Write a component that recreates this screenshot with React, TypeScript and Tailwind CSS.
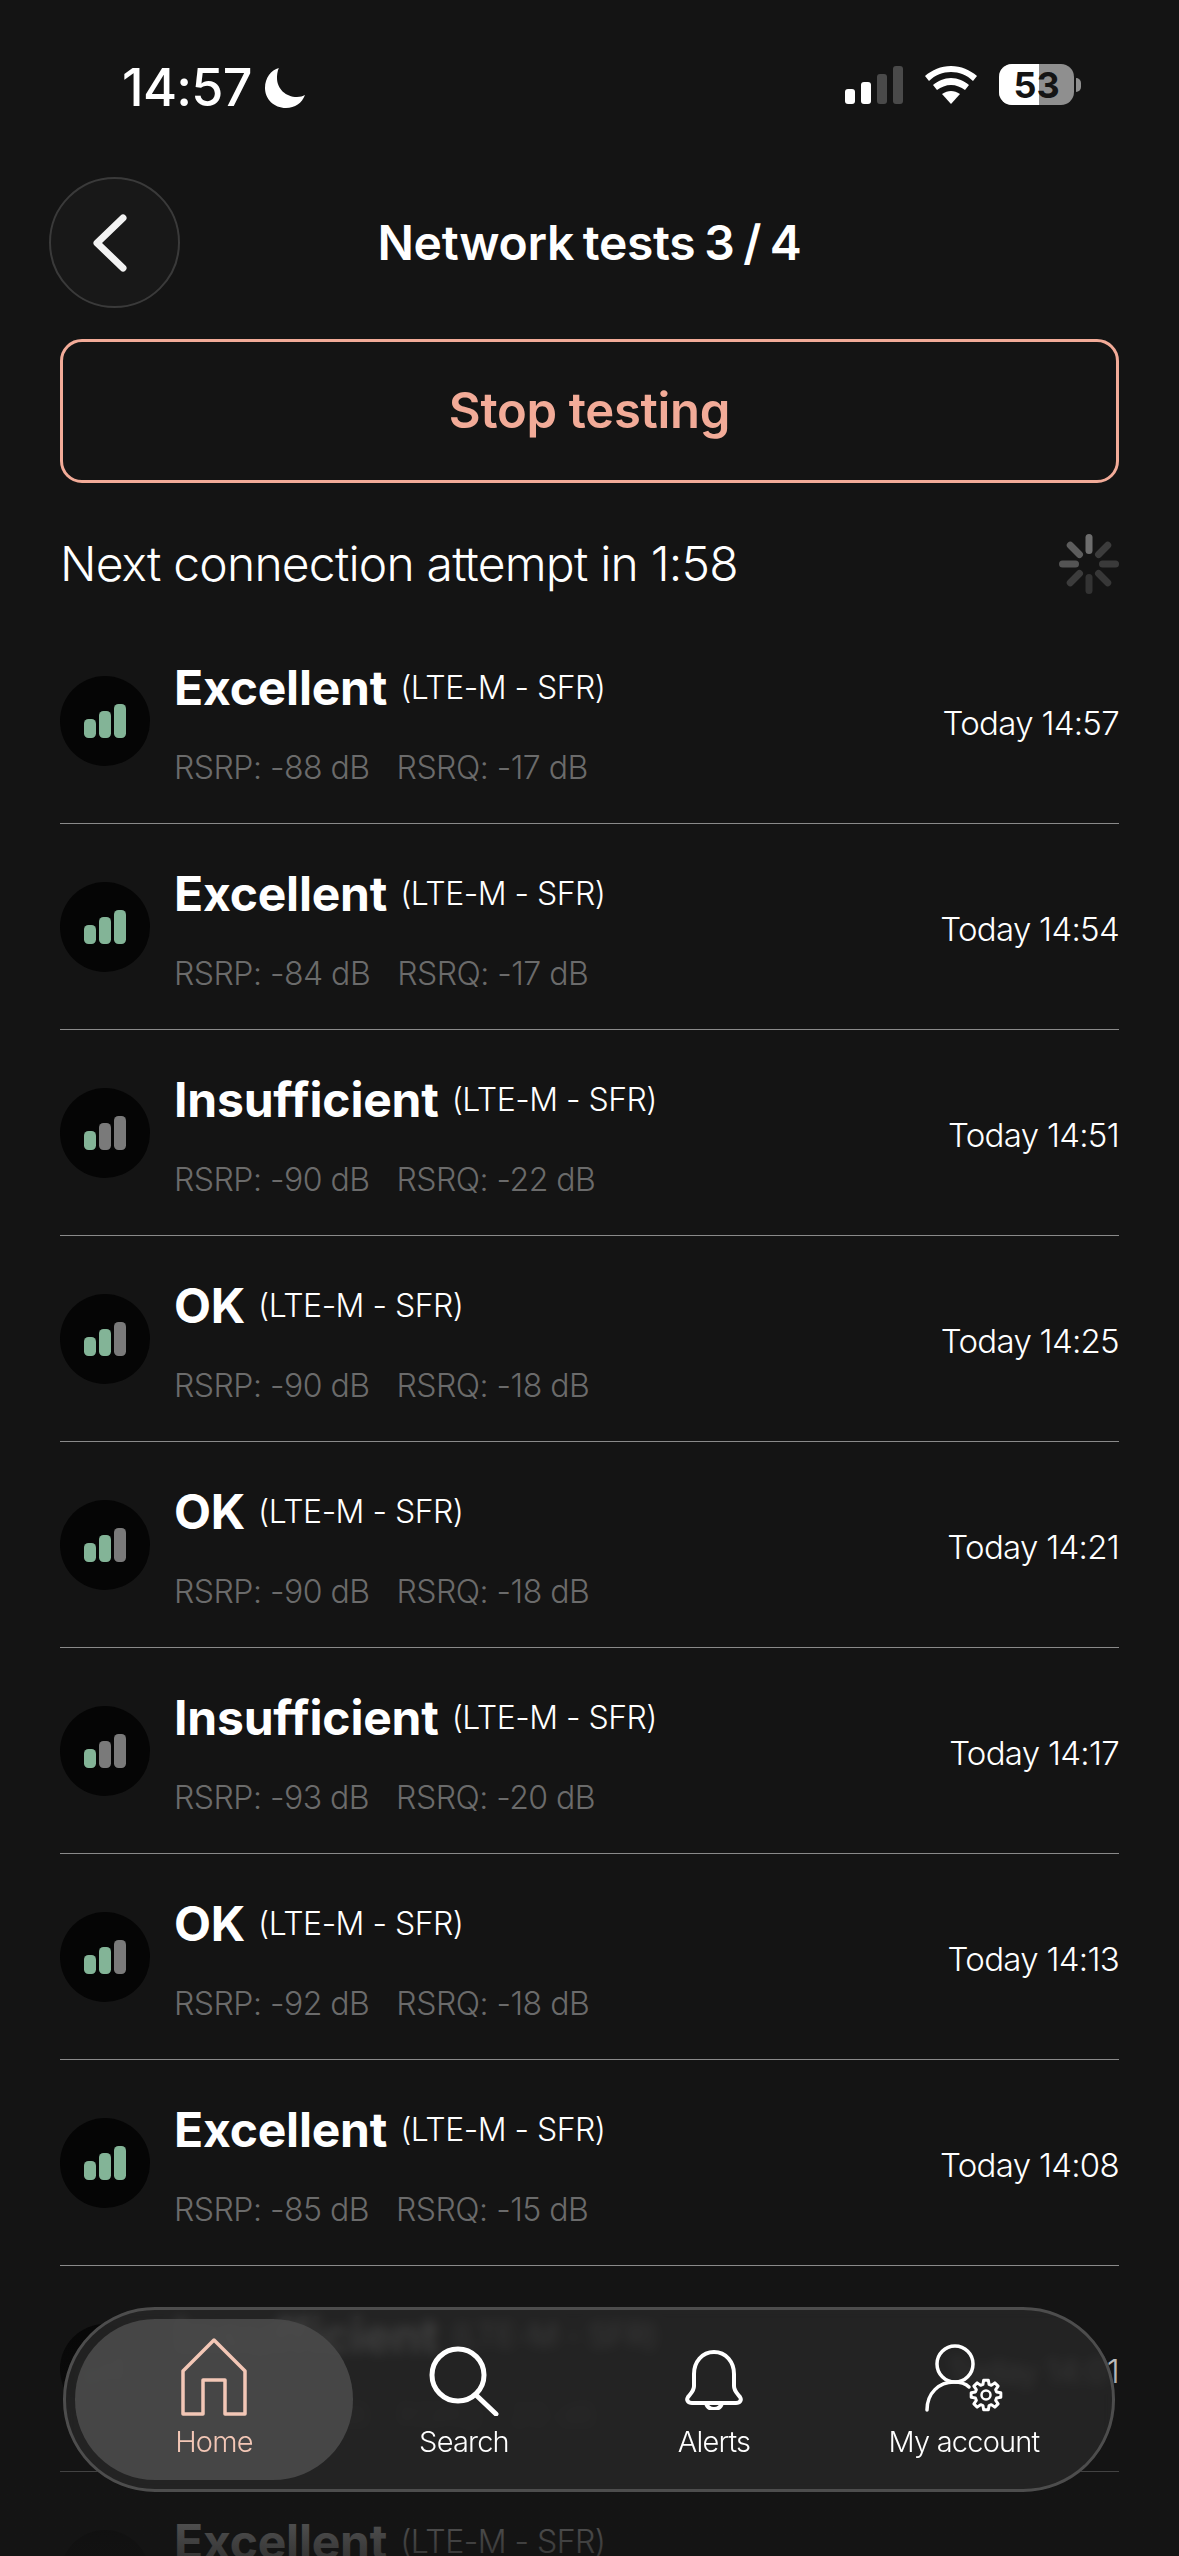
import { Fragment } from 'react'

const ROWS = [
  { label: 'Excellent', level: 3, rsrp: -88, rsrq: -17, time: 'Today 14:57' },
  { label: 'Excellent', level: 3, rsrp: -84, rsrq: -17, time: 'Today 14:54' },
  { label: 'Insufficient', level: 1, rsrp: -90, rsrq: -22, time: 'Today 14:51' },
  { label: 'OK', level: 2, rsrp: -90, rsrq: -18, time: 'Today 14:25' },
  { label: 'OK', level: 2, rsrp: -90, rsrq: -18, time: 'Today 14:21' },
  { label: 'Insufficient', level: 1, rsrp: -93, rsrq: -20, time: 'Today 14:17' },
  { label: 'OK', level: 2, rsrp: -92, rsrq: -18, time: 'Today 14:13' },
  { label: 'Excellent', level: 3, rsrp: -85, rsrq: -15, time: 'Today 14:08' },
  { label: 'Insufficient', level: 1, rsrp: -94, rsrq: -20, time: 'Today 14:01' },
  { label: 'Excellent', level: 3, rsrp: -86, rsrq: -16, time: 'Today 13:57' },
]

const SPOKES = [
  { angle: 0, opacity: 0.38 },
  { angle: 45, opacity: 0.17 },
  { angle: 90, opacity: 0.16 },
  { angle: 135, opacity: 0.15 },
  { angle: 180, opacity: 0.13 },
  { angle: 225, opacity: 0.17 },
  { angle: 270, opacity: 0.27 },
  { angle: 315, opacity: 0.31 },
]

// outline of the little gear on the account icon
function gearPath(cx: number, cy: number, outer: number, inner: number, teeth: number) {
  const pts: string[] = []
  const step = (Math.PI * 2) / teeth
  for (let i = 0; i < teeth; i++) {
    const a = i * step
    const corners = [
      [inner, a - step * 0.36],
      [outer, a - step * 0.2],
      [outer, a + step * 0.2],
      [inner, a + step * 0.36],
    ]
    corners.forEach(([r, t]) => {
      pts.push(`${(cx + r * Math.cos(t)).toFixed(2)} ${(cy + r * Math.sin(t)).toFixed(2)}`)
    })
  }
  return `M${pts.join('L')}Z`
}

function SignalBadge({ level }: { level: number }) {
  const bars = [
    { x: 24, y: 43, h: 19 },
    { x: 39, y: 35, h: 27 },
    { x: 54, y: 28, h: 34 },
  ]
  return (
    <svg width="90" height="90" viewBox="0 0 90 90" className="shrink-0">
      <circle cx="45" cy="45" r="45" fill="#050505" />
      {bars.map((b, i) => (
        <rect key={i} x={b.x} y={b.y} width="12" height={b.h} rx="4.5" fill={i < level ? '#83b497' : '#7a7a7a'} />
      ))}
    </svg>
  )
}

function Row({ label, level, rsrp, rsrq, time }: (typeof ROWS)[number]) {
  return (
    <div className="flex h-[206px] shrink-0 items-center border-b border-[#8a8a8a]">
      <SignalBadge level={level} />
      <div className="ml-[24px] flex flex-1 flex-col gap-[36px] pt-[6px]">
        <div className="flex h-[52px] items-center">
          <span className="text-[48px] leading-[52px] font-bold tracking-[-0.2px] text-white">{label}</span>
          <span className="ml-[13px] text-[32px] leading-[40px] font-light tracking-[-0.5px] text-white">(LTE-M - SFR)</span>
        </div>
        <div className="flex h-[36px] items-center gap-[27px] text-[32px] leading-[36px] font-light tracking-[-0.5px] text-[#6b6b6b]">
          <span>RSRP: {rsrp} dB</span>
          <span>RSRQ: {rsrq} dB</span>
        </div>
      </div>
      <span className="mt-[6px] text-[33px] font-light tracking-[-0.7px] text-white">{time}</span>
    </div>
  )
}

function StatusBar() {
  return (
    <div className="flex h-[177px] shrink-0 items-start justify-between pt-[64px] pl-[122px] pr-[98px]">
      <div className="flex items-center gap-[12px]">
        <span className="text-[52px] leading-[48px] font-medium tracking-[-0.7px] text-white">14:57</span>
        <svg width="42" height="42" viewBox="0 0 42 42">
          <path d="M15 1C14 2 13 7 13 11c0 11 9 19 20 19 3 0 6-1 8-2-3 8-10 13-19 13C10 41 1 32 1 21 1 11 7 3 15 1Z" fill="#fff" />
        </svg>
      </div>
      <div className="flex items-center">
        <svg width="58" height="38" viewBox="0 0 58 38">
          <rect x="0" y="23" width="10" height="15" rx="3" fill="#fff" />
          <rect x="16" y="16" width="10" height="22" rx="3" fill="#fff" />
          <rect x="32" y="8" width="10" height="30" rx="3" fill="#4a4a4a" />
          <rect x="48" y="0" width="10" height="38" rx="3" fill="#4a4a4a" />
        </svg>
        <svg width="52" height="38" viewBox="0 0 52 38" className="ml-[22px]">
          <path d="M26 0c10 0 19 4 26 10l-4 5C42 9 34 6 26 6S10 9 4 15l-4-5C7 4 16 0 26 0Z" fill="#fff" />
          <path d="M26 12c7 0 13 3 18 7l-4 5c-4-3-9-5-14-5s-10 2-14 5l-4-5c5-4 11-7 18-7Z" fill="#fff" />
          <path d="M26 25c3 0 6 1 9 3l-9 10-9-10c3-2 6-3 9-3Z" fill="#fff" />
        </svg>
        <div className="ml-[22px] flex items-center">
          <div className="relative flex h-[41px] w-[75px] items-center justify-center rounded-[13px] bg-[#8f8f8f]">
            <div className="absolute inset-y-0 left-0 w-[40px] rounded-l-[13px] bg-white" />
            <span className="relative text-[36px] leading-[40px] font-bold text-[#141414]">53</span>
          </div>
          <div className="ml-[2px] h-[14px] w-[5px] rounded-r-full bg-[#8f8f8f]" />
        </div>
      </div>
    </div>
  )
}

function Spinner() {
  return (
    <svg width="60" height="60" viewBox="0 0 60 60">
      {SPOKES.map((s) => (
        <line
          key={s.angle}
          x1="30"
          y1="3.5"
          x2="30"
          y2="16.5"
          stroke="#fff"
          strokeWidth="7"
          strokeLinecap="round"
          opacity={s.opacity}
          transform={`rotate(${s.angle} 30 30)`}
        />
      ))}
    </svg>
  )
}

function NavItem({ label, width, active, children }: { label: string; width: string; active?: boolean; children: React.ReactNode }) {
  return (
    <div className={`flex h-[161px] flex-col items-center justify-end pb-[20px] ${width} ${active ? 'rounded-[80px] bg-[#4a4a4a]/90 text-[#f3c7b6]' : 'text-white'}`}>
      <div className="flex h-[80px] items-end justify-center">{children}</div>
      <span className="mt-[8px] text-[29px] leading-[36px] font-light tracking-[-0.8px]">{label}</span>
    </div>
  )
}

function BottomNav() {
  return (
    <div className="absolute top-[2307px] left-[63px] flex h-[185px] w-[1052px] items-center rounded-[92px] border-[3px] border-[#4d4d4d] bg-[#262626]/85 pl-[9px] backdrop-blur-[6px]">
      <NavItem label="Home" width="w-[278px]" active>
        <svg width="66" height="78" viewBox="0 0 66 78" fill="none" stroke="#f3c7b6" strokeWidth="3.5" strokeLinejoin="round">
          <path d="M33 2 64 33V76H44V42H22V76H2V33L33 2Z" />
        </svg>
      </NavItem>
      <NavItem label="Search" width="w-[222px]">
        <svg width="70" height="70" viewBox="0 0 70 70" fill="none" stroke="#fff" strokeWidth="5" strokeLinecap="round">
          <circle cx="29" cy="29" r="26" />
          <path d="M47 49 67 68" />
        </svg>
      </NavItem>
      <NavItem label="Alerts" width="w-[278px]">
        <svg width="60" height="60" viewBox="0 0 60 60" fill="none" stroke="#fff" strokeWidth="4" strokeLinejoin="round" className="mb-[6px]">
          <path d="M30 2C18 2 10 12 10 24v12c0 5-3 7-6 11-2 3 0 6 4 6h44c4 0 6-3 4-6-3-4-6-6-6-11V24C50 12 42 2 30 2Z" />
          <path d="M22 53c1 4 4 6 8 6s7-2 8-6" />
        </svg>
      </NavItem>
      <NavItem label="My account" width="w-[222px]">
        <svg width="78" height="68" viewBox="0 0 78 68" fill="none" stroke="#fff" strokeWidth="3.5" strokeLinecap="round" className="mb-[4px]">
          <circle cx="30" cy="20" r="18" />
          <path d="M2 66c0-17 12-28 27-28 6 0 11 1 15 5" />
          <path d={gearPath(61, 51, 15, 11, 8)} strokeWidth="3" strokeLinejoin="round" />
          <circle cx="61" cy="51" r="4.5" strokeWidth="2.5" />
        </svg>
      </NavItem>
    </div>
  )
}

export default function App() {
  return (
    <div className="relative h-[2556px] w-[1179px] overflow-hidden bg-[#141414] font-['Inter',sans-serif]">
      <StatusBar />
      <div className="relative flex h-[131px] shrink-0 items-center justify-center">
        <div className="absolute left-[49px] flex size-[131px] items-center justify-center rounded-full border-[2px] border-[#3a3a3a] bg-[#181818]">
          <svg width="36" height="58" viewBox="0 0 36 58" fill="none" stroke="#f2f2f2" strokeWidth="7" strokeLinecap="round" strokeLinejoin="round" className="mr-[10px]">
            <path d="M31 4 5 29l26 25" />
          </svg>
        </div>
        <span className="text-[48px] font-semibold tracking-[-0.3px] [word-spacing:-3px] text-white">Network tests 3 / 4</span>
      </div>
      <div className="mx-[60px] mt-[31px] flex h-[144px] items-center justify-center rounded-[22px] border-[3px] border-[#f2ab98]">
        <span className="text-[49px] font-semibold tracking-[-0.3px] text-[#f2ab98]">Stop testing</span>
      </div>
      <div className="mx-[60px] flex h-[135px] items-center justify-between pt-[26px]">
        <span className="text-[48px] font-light tracking-[-0.8px] text-white">Next connection attempt in 1:58</span>
        <Spinner />
      </div>
      <div className="mx-[60px] flex flex-col">
        {ROWS.map((row, i) => (
          <Fragment key={i}>
            <Row {...row} />
          </Fragment>
        ))}
      </div>
      <div className="absolute inset-x-0 bottom-0 h-[290px] bg-gradient-to-b from-[#141414]/0 to-[#141414]/85" />
      <BottomNav />
    </div>
  )
}
